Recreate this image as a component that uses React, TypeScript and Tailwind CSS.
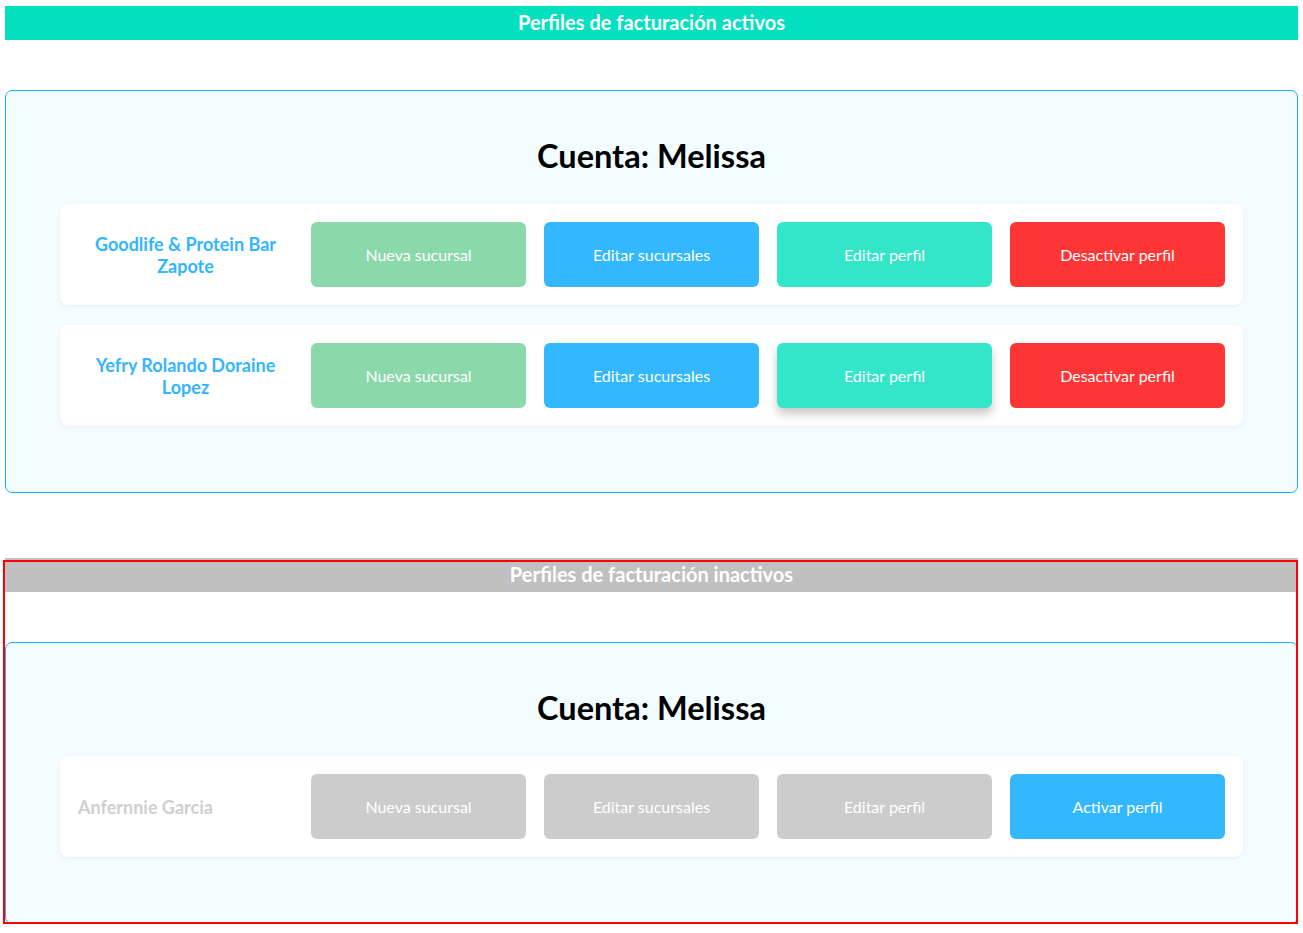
import React from 'react';

type Profile = { name: string; active: boolean; align: 'center' | 'left' };

const activeProfiles: Profile[] = [
  { name: 'Goodlife & Protein Bar Zapote', active: true, align: 'center' },
  { name: 'Yefry Rolando Doraine Lopez', active: true, align: 'center' },
];

const inactiveProfiles: Profile[] = [{ name: 'Anfernnie Garcia', active: false, align: 'left' }];

function Btn({ label, color, hovered }: { label: string; color: string; hovered?: boolean }) {
  return (
    <button
      className={`w-[215px] h-[65px] rounded-[6px] text-white text-[16px] ${color} ${
        hovered ? 'shadow-[0_6px_10px_rgba(0,0,0,0.22)]' : ''
      }`}
    >
      {label}
    </button>
  );
}

function ProfileRow({ p, hoverEdit }: { p: Profile; hoverEdit?: boolean }) {
  return (
    <div className="flex items-center bg-white rounded-[8px] shadow-[0_1px_4px_rgba(0,0,0,0.06)] py-[18px] pr-[18px]">
      <div
        className={`w-[251px] px-[18px] text-[18px] leading-[22px] font-bold ${
          p.align === 'center' ? 'text-center' : 'text-left'
        } ${p.active ? 'text-[#33b5ff]' : 'text-[#cfcfcf]'}`}
      >
        {p.name}
      </div>
      <div className="flex gap-[18px]">
        {p.active ? (
          <>
            <Btn label="Nueva sucursal" color="bg-[#8bd9ab]" />
            <Btn label="Editar sucursales" color="bg-[#33b8ff]" />
            <Btn label="Editar perfil" color="bg-[#33e5c9]" hovered={hoverEdit} />
            <Btn label="Desactivar perfil" color="bg-[#ff3636]" />
          </>
        ) : (
          <>
            <Btn label="Nueva sucursal" color="bg-[#cbcccb]" />
            <Btn label="Editar sucursales" color="bg-[#cbcccb]" />
            <Btn label="Editar perfil" color="bg-[#cbcccb]" />
            <Btn label="Activar perfil" color="bg-[#33b8ff]" />
          </>
        )}
      </div>
    </div>
  );
}

function AccountCard({ profiles, hoverSecond }: { profiles: Profile[]; hoverSecond?: boolean }) {
  return (
    <div className="border border-[#1aaefc] rounded-[7px] bg-[#f3fcfe] px-[54px] pt-[45px] pb-[66px]">
      <h2 className="text-center text-[32.5px] leading-[40px] font-bold text-black mb-[28px]">Cuenta: Melissa</h2>
      <div className="flex flex-col gap-[20px]">
        {profiles.map((p, i) => (
          <ProfileRow key={p.name} p={p} hoverEdit={hoverSecond && i === 1} />
        ))}
      </div>
    </div>
  );
}

export default function App() {
  return (
    <div className="bg-white px-[5px] pt-[6px] font-['Lato','Noto_Sans',sans-serif]">
      {/* Activos */}
      <div className="h-[34px] pb-[2px] bg-[#03e0bf] flex items-center justify-center text-white font-bold text-[20px]">
        Perfiles de facturación activos
      </div>
      <div className="mt-[50px]">
        <AccountCard profiles={activeProfiles} hoverSecond />
      </div>

      {/* Inactivos */}
      <div className="relative mt-[65px]">
        <div className="h-[366px] overflow-hidden">
          <div className="h-[34px] pb-[2px] bg-[#c0c0c0] flex items-center justify-center text-white font-bold text-[20px]">
            Perfiles de facturación inactivos
          </div>
          <div className="mt-[50px]">
            <AccountCard profiles={inactiveProfiles} />
          </div>
        </div>
        <div className="absolute -left-[2px] top-[2px] right-0 bottom-0 border-2 border-[#ff0000] pointer-events-none" />
      </div>
    </div>
  );
}
